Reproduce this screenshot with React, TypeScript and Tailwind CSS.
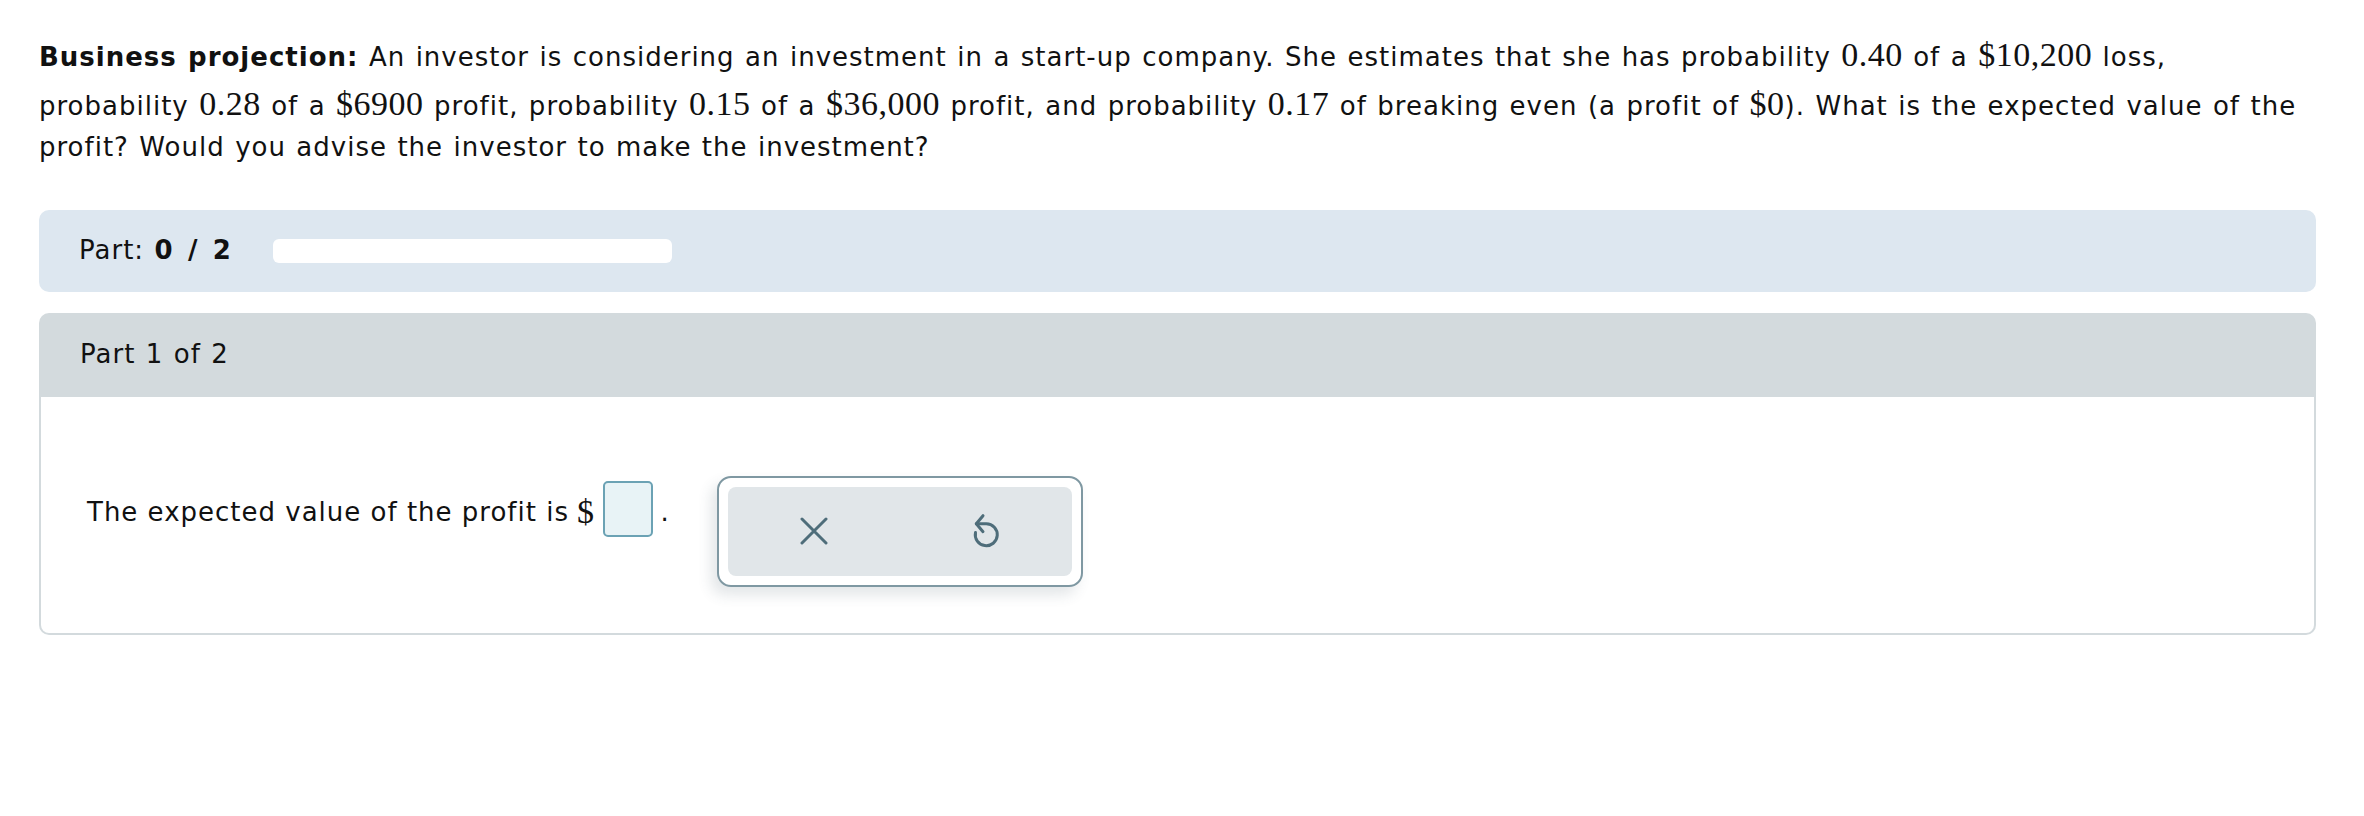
import React from 'react'

const math = "font-['Liberation_Serif',serif] text-[34px] leading-[49px] tracking-[0.5px]"

function CloseIcon() {
  return (
    <svg width="28" height="28" viewBox="0 0 28 28" fill="none" stroke="#4e6d7a" strokeWidth="3" strokeLinecap="round">
      <path d="M2 2L26 26M26 2L2 26" />
    </svg>
  )
}

function ResetIcon() {
  return (
    <svg width="30" height="36" viewBox="0 0 30 36" fill="none" stroke="#4e6d7a" strokeWidth="3" strokeLinecap="round" strokeLinejoin="round">
      <path d="M12 2.7L5.3 10.7L12 18.7" />
      <path d="M5.3 10.7H15.3A11 11 0 1 1 4.5 19.5" />
    </svg>
  )
}

export default function App() {
  return (
    <div className="min-h-screen bg-white text-[#111] font-['DejaVu_Sans',Verdana,sans-serif] text-[26px] tracking-[1px] [word-spacing:1.2px]">
      <div className="ml-[39px] w-[2277px] pt-[30px]">
        {/* question text */}
        <p className="leading-[38.5px]">
          <b>Business projection:</b> An investor is considering an investment in a start-up company. She estimates
          that she has probability <span className={math}>0.40</span> of a <span className={math}>$10,200</span> loss,
          probability <span className={math}>0.28</span> of a <span className={math}>$6900</span> profit, probability{' '}
          <span className={math}>0.15</span> of a <span className={math}>$36,000</span> profit, and probability{' '}
          <span className={math}>0.17</span> of breaking even (a profit of <span className={math}>$0</span>). What is the
          expected value of the profit? Would you advise the investor to make the investment?
        </p>

        {/* progress */}
        <div className="mt-[43px] h-[82px] rounded-[10px] bg-[#dde7f0] flex items-center pl-[40px]">
          <span>
            Part: <b className="tracking-[2.5px]">0 / 2</b>
          </span>
          <div className="ml-[40px] h-[24px] w-[399px] rounded-[6px] bg-white" />
        </div>

        {/* part card */}
        <div className="mt-[21px]">
          <div className="h-[84px] rounded-t-[10px] bg-[#d3dadd] flex items-center pl-[41px]">Part 1 of 2</div>
          <div className="border-2 border-t-0 border-[#d3dadd] rounded-b-[10px] pl-[46px] pt-[79px] pb-[46px] flex items-start">
            <div className="flex items-end mt-[5px]">
              <span className="leading-[38px] mb-[6px] [word-spacing:0px]">The expected value of the profit is</span>
              <span className={math + ' ml-[8px] mb-[1px]'}>$</span>
              <div className="ml-[9px] h-[56px] w-[50px] rounded-[5px] border-2 border-[#6ba2b4] bg-[#e8f3f6]" />
              <span className="ml-[7px] mb-[6px] leading-[38px]">.</span>
            </div>
            <div className="ml-[47px] w-[366px] h-[111px] rounded-[14px] border-2 border-[#7f98a2] bg-white p-[9px] shadow-[-6px_8px_14px_rgba(60,80,90,0.14)]">
              <div className="h-full rounded-[8px] bg-[#e1e6e9] flex">
                <button className="flex-1 flex items-center justify-center">
                  <CloseIcon />
                </button>
                <button className="flex-1 flex items-center justify-center">
                  <ResetIcon />
                </button>
              </div>
            </div>
          </div>
        </div>
      </div>
    </div>
  )
}
